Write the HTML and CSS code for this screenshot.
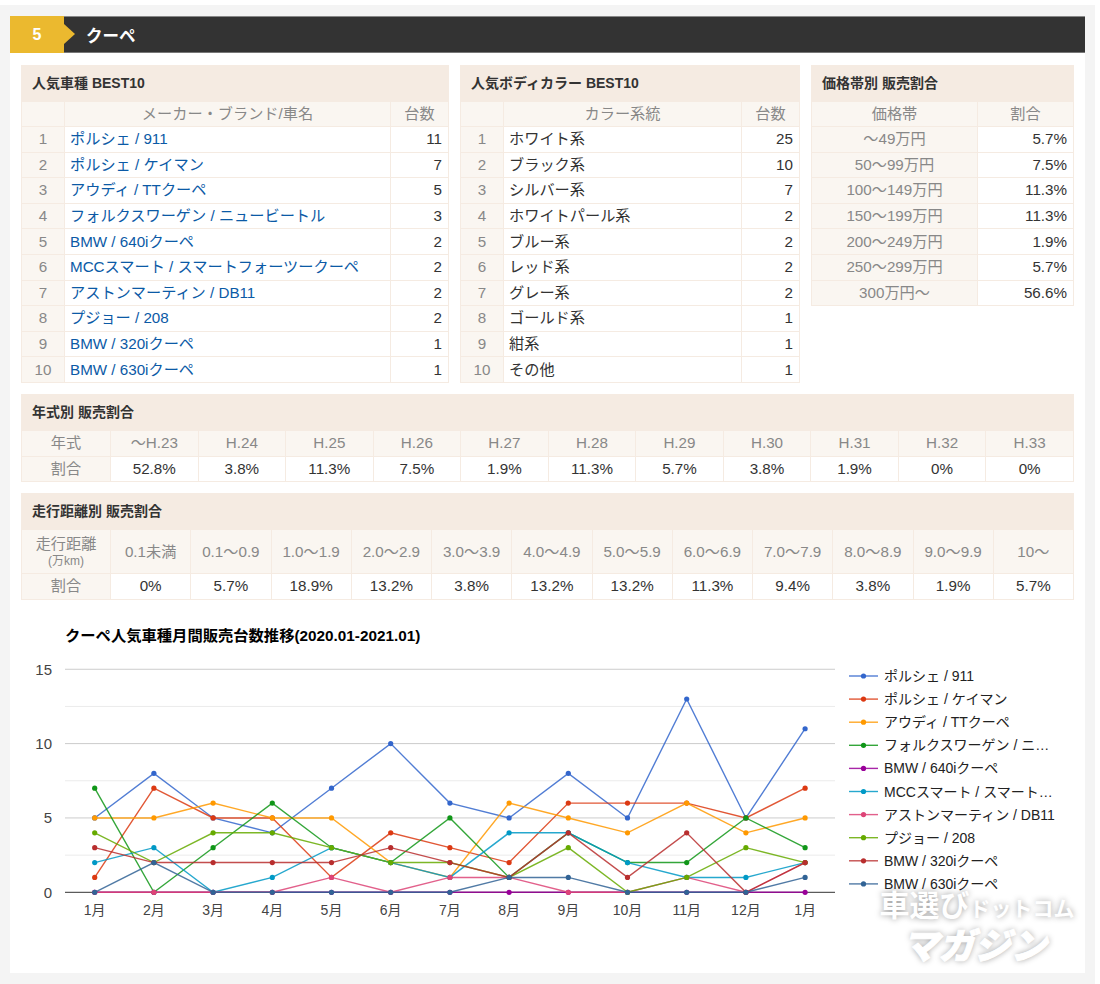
FILE: index.html
```html
<!DOCTYPE html>
<html lang="ja">
<head>
    <meta charset="UTF-8" />
    <title>クーペ</title>
    <link rel="stylesheet" href="styles.css">
</head>
<body>
    <div class="page">
        <div class="panel">
            <div class="rank-header">
                <div class="rank-num">5</div>
                <h2 class="rank-title">クーペ</h2>
            </div>

            <div class="content">
                <div class="top-row">
                    <div class="block block-cars">
                        <div class="block-title">人気車種 BEST10</div>
                        <table class="stat-table">
                            <colgroup><col class="col-no"><col><col class="col-count"></colgroup>
                            <tr class="head"><th></th><th>メーカー・ブランド/車名</th><th>台数</th></tr>
                            <tr><th>1</th><td><a href="#">ポルシェ / 911</a></td><td class="num">11</td></tr>
                            <tr><th>2</th><td><a href="#">ポルシェ / ケイマン</a></td><td class="num">7</td></tr>
                            <tr><th>3</th><td><a href="#">アウディ / TTクーペ</a></td><td class="num">5</td></tr>
                            <tr><th>4</th><td><a href="#">フォルクスワーゲン / ニュービートル</a></td><td class="num">3</td></tr>
                            <tr><th>5</th><td><a href="#">BMW / 640iクーペ</a></td><td class="num">2</td></tr>
                            <tr><th>6</th><td><a href="#">MCCスマート / スマートフォーツークーペ</a></td><td class="num">2</td></tr>
                            <tr><th>7</th><td><a href="#">アストンマーティン / DB11</a></td><td class="num">2</td></tr>
                            <tr><th>8</th><td><a href="#">プジョー / 208</a></td><td class="num">2</td></tr>
                            <tr><th>9</th><td><a href="#">BMW / 320iクーペ</a></td><td class="num">1</td></tr>
                            <tr><th>10</th><td><a href="#">BMW / 630iクーペ</a></td><td class="num">1</td></tr>
                        </table>
                    </div>

                    <div class="block block-colors">
                        <div class="block-title">人気ボディカラー BEST10</div>
                        <table class="stat-table">
                            <colgroup><col class="col-no"><col><col class="col-count"></colgroup>
                            <tr class="head"><th></th><th>カラー系統</th><th>台数</th></tr>
                            <tr><th>1</th><td>ホワイト系</td><td class="num">25</td></tr>
                            <tr><th>2</th><td>ブラック系</td><td class="num">10</td></tr>
                            <tr><th>3</th><td>シルバー系</td><td class="num">7</td></tr>
                            <tr><th>4</th><td>ホワイトパール系</td><td class="num">2</td></tr>
                            <tr><th>5</th><td>ブルー系</td><td class="num">2</td></tr>
                            <tr><th>6</th><td>レッド系</td><td class="num">2</td></tr>
                            <tr><th>7</th><td>グレー系</td><td class="num">2</td></tr>
                            <tr><th>8</th><td>ゴールド系</td><td class="num">1</td></tr>
                            <tr><th>9</th><td>紺系</td><td class="num">1</td></tr>
                            <tr><th>10</th><td>その他</td><td class="num">1</td></tr>
                        </table>
                    </div>

                    <div class="block block-price">
                        <div class="block-title">価格帯別 販売割合</div>
                        <table class="stat-table">
                            <colgroup><col><col class="col-rate"></colgroup>
                            <tr class="head"><th>価格帯</th><th>割合</th></tr>
                            <tr><th>～49万円</th><td class="num">5.7%</td></tr>
                            <tr><th>50～99万円</th><td class="num">7.5%</td></tr>
                            <tr><th>100～149万円</th><td class="num">11.3%</td></tr>
                            <tr><th>150～199万円</th><td class="num">11.3%</td></tr>
                            <tr><th>200～249万円</th><td class="num">1.9%</td></tr>
                            <tr><th>250～299万円</th><td class="num">5.7%</td></tr>
                            <tr><th>300万円～</th><td class="num">56.6%</td></tr>
                        </table>
                    </div>
                </div>

                <div class="block block-wide">
                    <div class="block-title">年式別 販売割合</div>
                    <table class="stat-table ratio-table">
                        <colgroup><col class="col-label"></colgroup>
                        <tr>
                            <th>年式</th><th>～H.23</th><th>H.24</th><th>H.25</th><th>H.26</th><th>H.27</th><th>H.28</th>
                            <th>H.29</th><th>H.30</th><th>H.31</th><th>H.32</th><th>H.33</th>
                        </tr>
                        <tr>
                            <th>割合</th><td>52.8%</td><td>3.8%</td><td>11.3%</td><td>7.5%</td><td>1.9%</td><td>11.3%</td>
                            <td>5.7%</td><td>3.8%</td><td>1.9%</td><td>0%</td><td>0%</td>
                        </tr>
                    </table>
                </div>

                <div class="block block-wide">
                    <div class="block-title">走行距離別 販売割合</div>
                    <table class="stat-table ratio-table">
                        <colgroup><col class="col-label"></colgroup>
                        <tr class="tall">
                            <th>走行距離<span class="unit">(万km)</span></th><th>0.1未満</th><th>0.1～0.9</th><th>1.0～1.9</th><th>2.0～2.9</th>
                            <th>3.0～3.9</th><th>4.0～4.9</th><th>5.0～5.9</th><th>6.0～6.9</th><th>7.0～7.9</th>
                            <th>8.0～8.9</th><th>9.0～9.9</th><th>10～</th>
                        </tr>
                        <tr>
                            <th>割合</th><td>0%</td><td>5.7%</td><td>18.9%</td><td>13.2%</td>
                            <td>3.8%</td><td>13.2%</td><td>13.2%</td><td>11.3%</td><td>9.4%</td>
                            <td>3.8%</td><td>1.9%</td><td>5.7%</td>
                        </tr>
                    </table>
                </div>
            </div>

            <div class="chart-wrap">
                <svg id="chart" class="chart" viewBox="10 600 1075 373" xmlns="http://www.w3.org/2000/svg"></svg>
                <div class="watermark">
                    <div class="wm-line1">車選び<span class="wm-small">ドットコム</span></div>
                    <div class="wm-line2">マガジン</div>
                </div>
            </div>
        </div>
    </div>
    <script src="chart.js"></script>
</body>
</html>
```

FILE: styles.css
```css
body,
html {
    margin: 0;
    background: #fff;
    font-family: "Liberation Sans", "Noto Sans CJK JP", sans-serif;
    color: #333;
}

.page {
    width: 1095px;
    height: 979px;
    margin-top: 5px;
    padding: 11px 10px;
    box-sizing: border-box;
    background: #f4f4f4;
}

.panel {
    background: #fff;
    height: 957px;
}

.rank-header {
    display: flex;
    align-items: center;
    height: 37px;
    box-sizing: border-box;
    background: #333;
    border-top: 1px solid #888;
    border-bottom: 1px solid #777;
}

.rank-num {
    position: relative;
    width: 54px;
    height: 37px;
    margin: -1px 0;
    background: #ebb92f;
    color: #fff;
    font-size: 16px;
    font-weight: bold;
    line-height: 37px;
    text-align: center;
}

.rank-num::after {
    content: "";
    position: absolute;
    top: 8px;
    left: 54px;
    border-left: 11px solid #ebb92f;
    border-top: 10.5px solid transparent;
    border-bottom: 10.5px solid transparent;
}

.rank-title {
    margin: 0 0 0 22px;
    color: #fff;
    font-size: 16.5px;
    font-weight: bold;
}

.content {
    padding: 12px 11px 0;
}

.top-row {
    display: flex;
    align-items: flex-start;
    gap: 11px;
}

.block-cars {
    width: 428px;
}

.block-colors {
    width: 340px;
}

.block-price {
    width: 263px;
}

.block-wide {
    margin-top: 11px;
}

.block-title {
    height: 36px;
    padding-left: 11px;
    background: #f5ebe2;
    color: #333;
    font-size: 14px;
    font-weight: bold;
    line-height: 36px;
}

.stat-table {
    width: 100%;
    border-collapse: collapse;
    table-layout: fixed;
    font-size: 15.2px;
}

.stat-table th,
.stat-table td {
    height: 25.6px;
    padding: 0;
    border: 1px solid #f5ebe2;
    box-sizing: border-box;
    line-height: 1.2;
}

.stat-table .head th {
    height: 25px;
}

.stat-table th {
    background: #faf6f1;
    color: #888;
    font-weight: normal;
    text-align: center;
}

.stat-table td {
    padding-left: 5px;
    background: #fff;
}

.stat-table td.num {
    padding: 0 6px 0 0;
    color: #333;
    text-align: right;
}

.stat-table a {
    color: #0b5aa6;
    text-decoration: none;
}

.col-no {
    width: 43px;
}

.col-count {
    width: 58px;
}

.col-rate {
    width: 96px;
}

.col-label {
    width: 89px;
}

.ratio-table td {
    padding: 0;
    text-align: center;
}

.ratio-table .tall th {
    height: 44px;
}

.unit {
    display: block;
    font-size: 12px;
}

.chart-wrap {
    position: relative;
}

.chart {
    display: block;
    width: 1075px;
    height: 373px;
}

.chart text {
    font-family: "Liberation Sans", "Noto Sans CJK JP", sans-serif;
}

.watermark {
    position: absolute;
    top: 294px;
    right: 8px;
    width: 200px;
    color: #fff;
    font-weight: bold;
    text-align: center;
    text-shadow: 0 0 6px rgba(0, 0, 0, .4);
}

.wm-line1 {
    font-size: 30px;
    line-height: 24px;
    white-space: nowrap;
}

.wm-small {
    font-size: 21px;
}

.wm-line2 {
    margin-top: 6px;
    padding-right: 5px;
    font-size: 36px;
    font-style: italic;
    font-weight: 900;
    line-height: 40px;
    -webkit-text-stroke: 1px #fff;
}
```

FILE: chart.js
```js
const NS = 'http://www.w3.org/2000/svg';
const svg = document.getElementById('chart');

const months = ['1月', '2月', '3月', '4月', '5月', '6月', '7月', '8月', '9月', '10月', '11月', '12月', '1月'];

const series = [
    { name: 'ポルシェ / 911', color: '#3366cc', data: [5, 8, 5, 4, 7, 10, 6, 5, 8, 5, 13, 5, 11] },
    { name: 'ポルシェ / ケイマン', color: '#dc3912', data: [1, 7, 5, 5, 1, 4, 3, 2, 6, 6, 6, 5, 7] },
    { name: 'アウディ / TTクーペ', color: '#ff9900', data: [5, 5, 6, 5, 5, 2, 1, 6, 5, 4, 6, 4, 5] },
    { name: 'フォルクスワーゲン / ニ…', color: '#109618', data: [7, 0, 3, 6, 3, 2, 5, 1, 4, 2, 2, 5, 3] },
    { name: 'BMW / 640iクーペ', color: '#990099', data: [0, 0, 0, 0, 0, 0, 0, 0, 0, 0, 0, 0, 0] },
    { name: 'MCCスマート / スマート…', color: '#0099c6', data: [2, 3, 0, 1, 3, 2, 1, 4, 4, 2, 1, 1, 2] },
    { name: 'アストンマーティン / DB11', color: '#dd4477', data: [0, 0, 0, 0, 1, 0, 1, 1, 0, 0, 1, 0, 2] },
    { name: 'プジョー / 208', color: '#66aa00', data: [4, 2, 4, 4, 3, 2, 2, 1, 3, 0, 1, 3, 2] },
    { name: 'BMW / 320iクーペ', color: '#b82e2e', data: [3, 2, 2, 2, 2, 3, 2, 1, 4, 1, 4, 0, 2] },
    { name: 'BMW / 630iクーペ', color: '#316395', data: [0, 2, 0, 0, 0, 0, 0, 1, 1, 0, 0, 0, 1] }
];

const xOf = i => 94.7 + i * 59.2;
const yOf = v => 892.3 - v * 14.87;

function add(tag, attrs, text) {
    const el = document.createElementNS(NS, tag);
    Object.keys(attrs).forEach(k => el.setAttribute(k, attrs[k]));
    if (text !== undefined) el.textContent = text;
    svg.appendChild(el);
    return el;
}

add('text', { x: 65, y: 641, 'font-size': 15.3, 'font-weight': 'bold', fill: '#000' }, 'クーペ人気車種月間販売台数推移(2020.01-2021.01)');

// 目盛り線
for (let v = 2.5; v <= 15; v += 2.5) {
    const major = v % 5 === 0;
    add('line', { x1: 65, x2: 835, y1: yOf(v), y2: yOf(v), stroke: major ? '#ccc' : '#ebebeb', 'stroke-width': 1 });
}

[0, 5, 10, 15].forEach(v => {
    add('text', { x: 52, y: yOf(v) + 5.5, 'font-size': 15, 'text-anchor': 'end', fill: '#444' }, v);
});

months.forEach((m, i) => {
    add('text', { x: xOf(i), y: 915, 'font-size': 14, 'text-anchor': 'middle', fill: '#444' }, m);
});

add('line', { x1: 65, x2: 835, y1: yOf(0), y2: yOf(0), stroke: '#333', 'stroke-width': 1 });

series.forEach((s, n) => {
    const points = s.data.map((v, i) => `${xOf(i)},${yOf(v)}`).join(' ');
    add('polyline', { points: points, fill: 'none', stroke: s.color, 'stroke-width': 1.4, 'stroke-opacity': 0.85 });
    s.data.forEach((v, i) => {
        add('circle', { cx: xOf(i), cy: yOf(v), r: 2.6, fill: s.color });
    });

    // 凡例
    const ly = 676 + n * 23.1;
    add('line', { x1: 849, x2: 878, y1: ly, y2: ly, stroke: s.color, 'stroke-width': 1.4, 'stroke-opacity': 0.85 });
    add('circle', { cx: 863.5, cy: ly, r: 2.6, fill: s.color });
    add('text', { x: 884, y: ly + 5, 'font-size': 14, fill: '#222' }, s.name);
});
```
